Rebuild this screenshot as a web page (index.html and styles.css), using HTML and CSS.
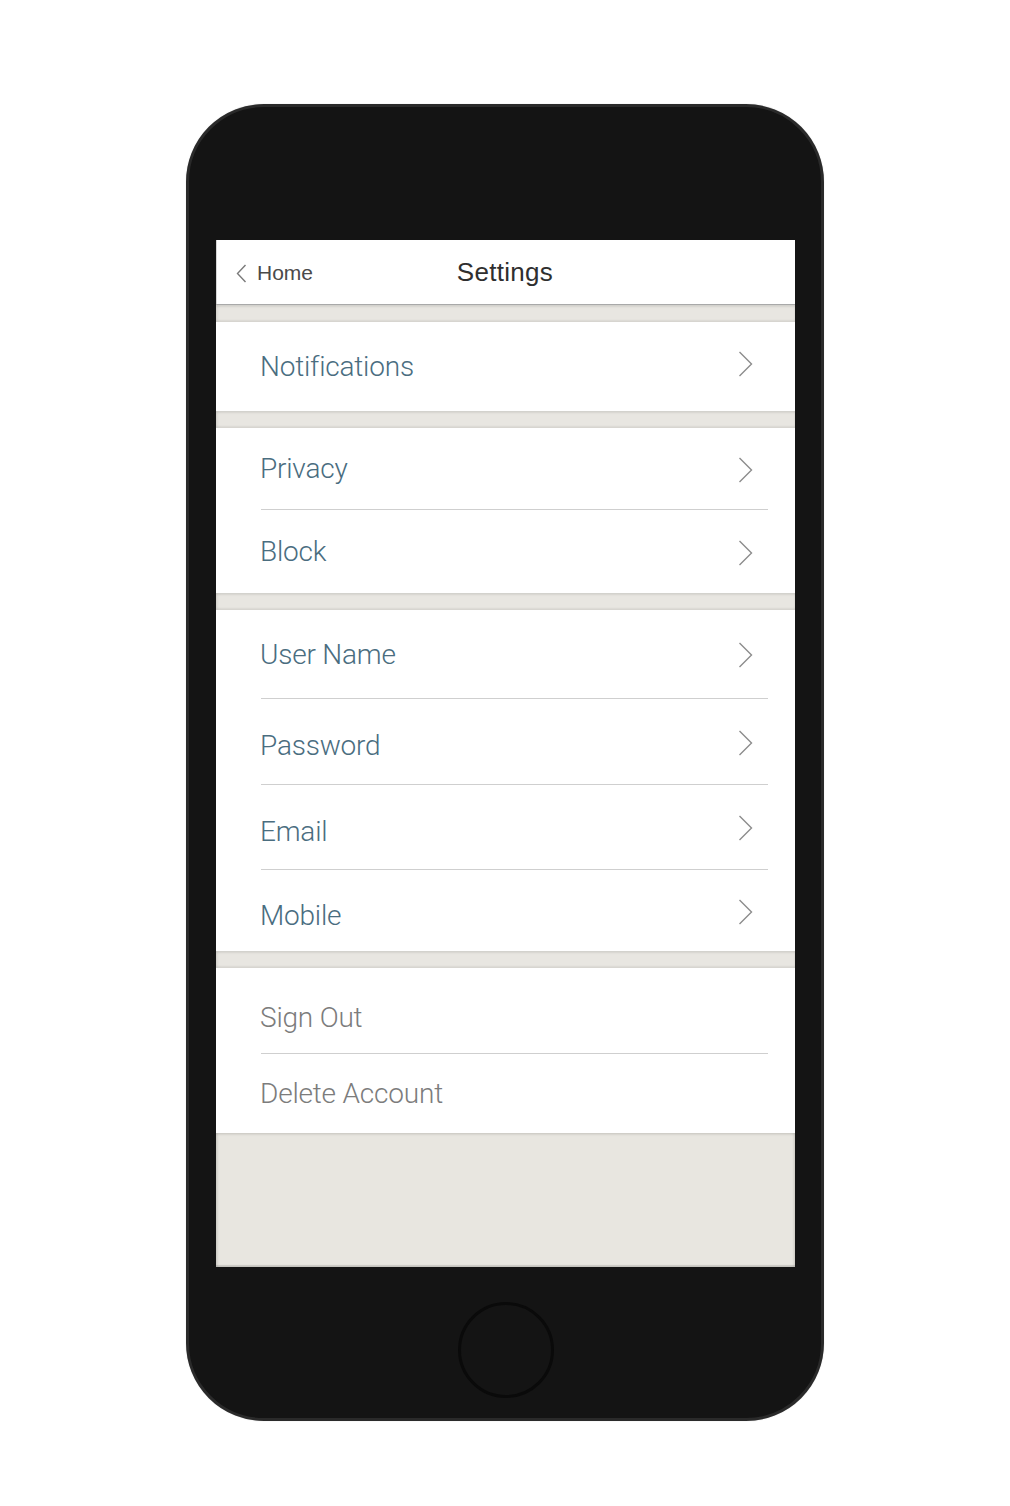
FILE: index.html
```html
<!DOCTYPE html>
<html>
<head>
<meta charset="utf-8">
<title>Settings</title>
<link rel="stylesheet" href="styles.css">
</head>
<body>
<div class="stage">
  <div class="phone">
    <div class="screen">
      <header class="navbar">
        <div class="back">
          <svg class="back-icon" width="11" height="19" viewBox="0 0 11 19"><path d="M9.5 1 L1.5 9.5 L9.5 18" fill="none" stroke="#7a7a7a" stroke-width="1.4"/></svg>
          <span>Home</span>
        </div>
        <div class="title">Settings</div>
        <div></div>
      </header>
      <div class="band"></div>
      <section class="group">
        <div class="row h89"><div class="cell last"><span class="label">Notifications</span><svg class="chev up" width="15" height="26" viewBox="0 0 15 26"><path d="M1.5 1 L13.5 13 L1.5 25" fill="none" stroke="#8c8c8c" stroke-width="1.4"/></svg></div></div>
      </section>
      <div class="band"></div>
      <section class="group">
        <div class="row h82"><div class="cell"><span class="label">Privacy</span><svg class="chev" width="15" height="26" viewBox="0 0 15 26"><path d="M1.5 1 L13.5 13 L1.5 25" fill="none" stroke="#8c8c8c" stroke-width="1.4"/></svg></div></div>
        <div class="row h83"><div class="cell last"><span class="label">Block</span><svg class="chev" width="15" height="26" viewBox="0 0 15 26"><path d="M1.5 1 L13.5 13 L1.5 25" fill="none" stroke="#8c8c8c" stroke-width="1.4"/></svg></div></div>
      </section>
      <div class="band"></div>
      <section class="group">
        <div class="row h89"><div class="cell"><span class="label">User Name</span><svg class="chev" width="15" height="26" viewBox="0 0 15 26"><path d="M1.5 1 L13.5 13 L1.5 25" fill="none" stroke="#8c8c8c" stroke-width="1.4"/></svg></div></div>
        <div class="row h86"><div class="cell"><span class="label low">Password</span><svg class="chev" width="15" height="26" viewBox="0 0 15 26"><path d="M1.5 1 L13.5 13 L1.5 25" fill="none" stroke="#8c8c8c" stroke-width="1.4"/></svg></div></div>
        <div class="row h85"><div class="cell"><span class="label low">Email</span><svg class="chev" width="15" height="26" viewBox="0 0 15 26"><path d="M1.5 1 L13.5 13 L1.5 25" fill="none" stroke="#8c8c8c" stroke-width="1.4"/></svg></div></div>
        <div class="row h81"><div class="cell last"><span class="label lower">Mobile</span><svg class="chev" width="15" height="26" viewBox="0 0 15 26"><path d="M1.5 1 L13.5 13 L1.5 25" fill="none" stroke="#8c8c8c" stroke-width="1.4"/></svg></div></div>
      </section>
      <div class="band"></div>
      <section class="group">
        <div class="row h86"><div class="cell"><span class="label muted lowest">Sign Out</span></div></div>
        <div class="row h79"><div class="cell last"><span class="label muted">Delete Account</span></div></div>
      </section>
      <div class="filler"></div>
    </div>
    <div class="bottom">
      <div class="home-button"></div>
    </div>
  </div>
</div>
</body>
</html>
```

FILE: styles.css
```css
* { box-sizing: border-box; }
html, body { margin: 0; padding: 0; background: #ffffff; }
body { font-family: "Liberation Sans", Arial, sans-serif; }

.stage {
  width: 1010px;
  height: 1506px;
  padding-top: 104px;
  padding-left: 186px;
}

.phone {
  width: 638px;
  height: 1317px;
  background: #141414;
  border: 3px solid #2a2a2a;
  border-radius: 78px;
  padding: 133px 26px 0 27px;
  display: flex;
  flex-direction: column;
  box-shadow: 0 0 1px rgba(0,0,0,0.25);
}

.screen {
  width: 579px;
  height: 1027px;
  background: #ffffff;
  display: flex;
  flex-direction: column;
  box-shadow: inset 1px 0 0 #d6d6d6;
}

.navbar {
  height: 65px;
  border-bottom: 1px solid #a9a9a9;
  display: grid;
  grid-template-columns: 1fr auto 1fr;
  align-items: center;
  padding-top: 1px;
}
.back {
  display: flex;
  align-items: center;
  padding-left: 20px;
  color: #4a4a4a;
  font-size: 21px;
  gap: 10px;
}
.back-icon { margin-top: 1px; }
.title {
  font-size: 26px;
  color: #2f2f2f;
  letter-spacing: 0.3px;
  padding-right: 1px;
}

.band {
  height: 17px;
  background: #e8e6e1;
  box-shadow: inset 0 2px 2px rgba(0,0,0,0.08), inset 0 -2px 2px rgba(0,0,0,0.06), inset 2px 0 3px rgba(0,0,0,0.05);
}

.group { background: #ffffff; display: flex; flex-direction: column; }

.row {
  padding-left: 45px;
  padding-right: 27px;
  display: flex;
}
.h79 { height: 79px; }
.h81 { height: 81px; }
.h82 { height: 82px; }
.h83 { height: 83px; }
.h85 { height: 85px; }
.h86 { height: 86px; }
.h89 { height: 89px; }

.cell {
  flex: 1;
  display: flex;
  align-items: center;
  justify-content: space-between;
  padding-right: 15px;
  border-bottom: 1px solid #cfcfcf;
}
.cell.last { border-bottom: none; }

.label {
  font-family: Roboto, "Liberation Sans", sans-serif;
  font-weight: 300;
  font-size: 28px;
  color: #4a6d7f;
  letter-spacing: -0.2px;
  margin-left: -1px;
}
.label.low { margin-top: 8px; }
.label.lower { margin-top: 10px; }
.label.lowest { margin-top: 14px; }
.label.muted { color: #7c7c7c; }

.chev { margin-top: 2px; }
.chev.up { margin-top: -6px; }

.filler {
  flex: 1;
  background: #e8e6e0;
  box-shadow: inset 0 2px 2px rgba(0,0,0,0.08), inset 2px 0 2px rgba(0,0,0,0.08), inset -2px 0 2px rgba(0,0,0,0.06), inset 0 -2px 1px rgba(0,0,0,0.12);
}

.bottom {
  flex: 1;
  display: flex;
  justify-content: center;
  padding-top: 35px;
}
.home-button {
  width: 96px;
  height: 96px;
  border-radius: 50%;
  border: 3px solid #0a0a0a;
}
```
